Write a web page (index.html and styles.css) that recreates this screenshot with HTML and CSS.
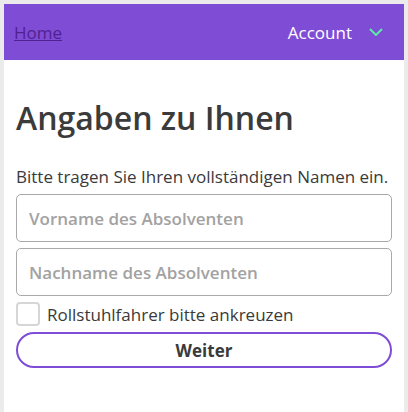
FILE: index.html
```html
<!DOCTYPE html>
<html lang="de">
<head>
<meta charset="utf-8">
<link rel="stylesheet" href="styles.css">
</head>
<body>
<div class="page">
  <nav class="nav">
    <a class="home" href="#">Home</a>
    <div class="account">
      <span>Account</span>
      <svg class="chev" width="14" height="8" viewBox="0 0 14 8"><path d="M1 1 L7 7 L13 1" fill="none" stroke="#5ee8a8" stroke-width="2"/></svg>
    </div>
  </nav>
  <main class="content">
    <h1 class="title">Angaben zu Ihnen</h1>
    <p class="intro">Bitte tragen Sie Ihren vollständigen Namen ein.</p>
    <input class="field" type="text" placeholder="Vorname des Absolventen">
    <input class="field" type="text" placeholder="Nachname des Absolventen">
    <label class="check"><span class="box"></span><span>Rollstuhlfahrer bitte ankreuzen</span></label>
    <button class="btn" type="button">Weiter</button>
  </main>
</div>
</body>
</html>
```

FILE: styles.css
```css
html, body { margin: 0; padding: 0; }
body {
  background: #ebebeb;
  font-family: "Open Sans", "Noto Sans", sans-serif;
  color: #3a3a3a;
  padding: 4px 4px 0 4px;
  height: 412px;
  box-sizing: border-box;
  overflow: hidden;
}
.page {
  background: #fff;
  height: 100%;
}
.nav {
  background: #7f4cd6;
  height: 56px;
  display: flex;
  align-items: center;
  justify-content: space-between;
  padding: 0 21px 0 10px;
}
.home {
  color: #52218f;
  font-size: 17px;
  text-decoration: underline;
}
.account {
  display: flex;
  align-items: center;
  gap: 17px;
  color: #fff;
  font-size: 17px;
}
.chev { display: block; }
.content {
  padding: 0 12px;
  display: flex;
  flex-direction: column;
}
.title {
  font-size: 32px;
  font-weight: 600;
  margin: 37px 0 26px 0;
  line-height: 42px;
  color: #3b3b3b;
}
.intro {
  font-size: 17px;
  margin: 0 0 5px 0;
  line-height: 24px;
}
.field {
  height: 48px;
  box-sizing: border-box;
  border: 1px solid #a9a9a9;
  border-radius: 5px;
  padding: 0 12px;
  font-family: inherit;
  font-size: 17px;
  margin: 0 0 6px 0;
  color: #333;
}
.field::placeholder { color: #a2a2a2; font-weight: 600; }
.check {
  display: flex;
  align-items: center;
  gap: 7px;
  font-size: 17px;
  margin: 0 0 6px 0;
  height: 24px;
}
.box {
  width: 20px;
  height: 20px;
  border: 2px solid #d6d6d6;
  border-radius: 4px;
  display: block;
  box-sizing: content-box;
}
.btn {
  height: 36px;
  border: 2px solid #7f4cd6;
  border-radius: 18px;
  background: #fff;
  font-family: inherit;
  font-size: 17px;
  font-weight: 700;
  color: #3a3a3a;
}
```
